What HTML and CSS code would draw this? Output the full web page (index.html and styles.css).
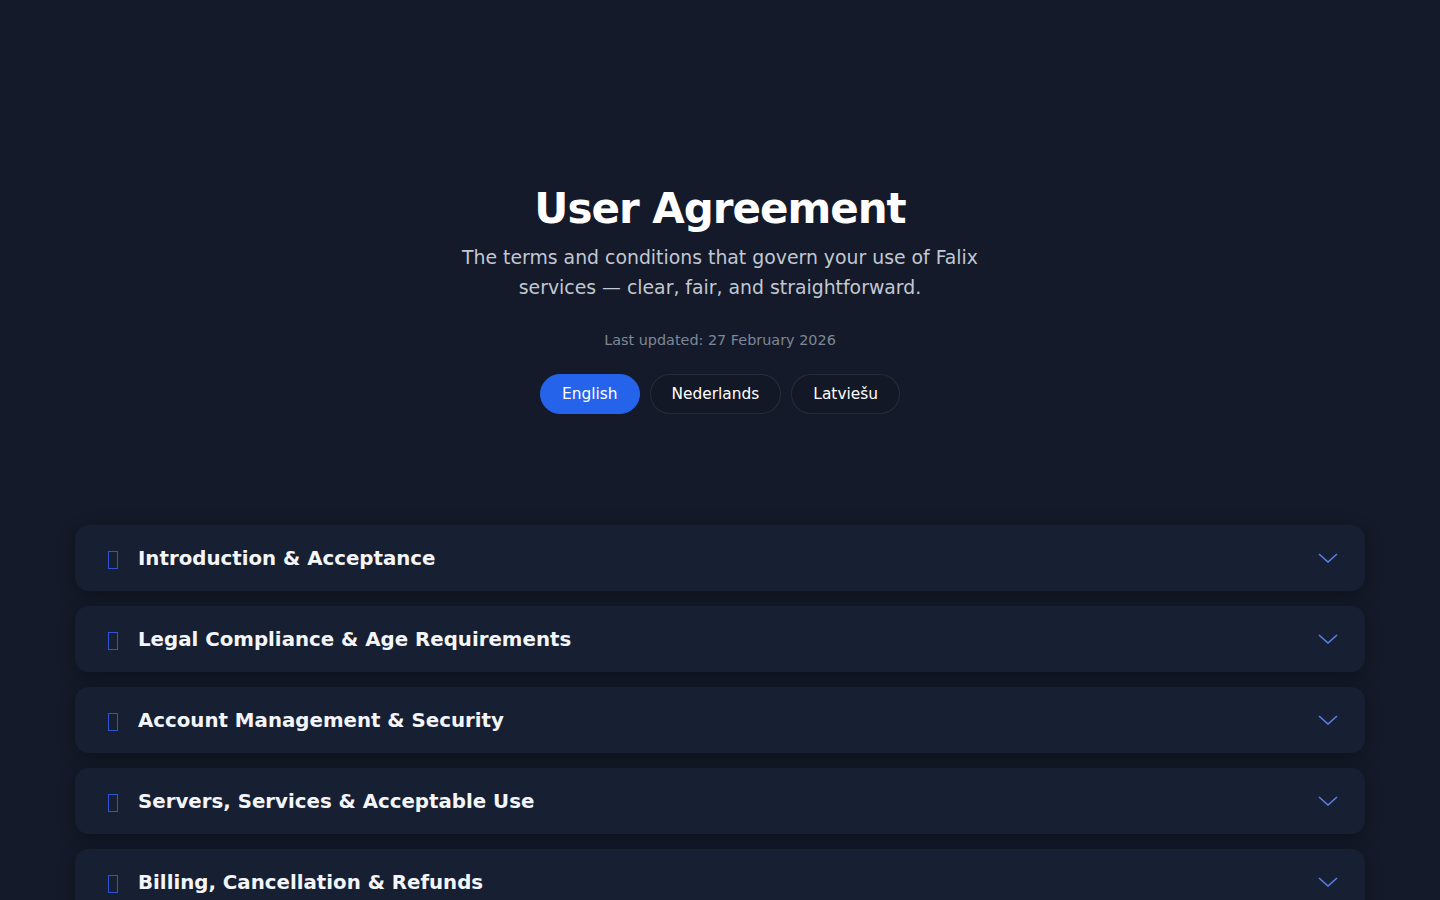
FILE: index.html
```html
<!DOCTYPE html>
<html lang="en">
<head>
<meta charset="utf-8">
<title>User Agreement — Falix</title>
<link rel="stylesheet" href="styles.css">
</head>
<body>
<main class="page">
  <header class="hero">
    <h1 class="hero-title">User Agreement</h1>
    <p class="hero-lead">The terms and conditions that govern your use of Falix services — clear, fair, and straightforward.</p>
    <p class="hero-meta">Last updated: 27 February 2026</p>
    <nav class="lang-switch">
      <button class="lang-btn is-active">English</button>
      <button class="lang-btn">Nederlands</button>
      <button class="lang-btn">Latviešu</button>
    </nav>
  </header>

  <section class="sections">
    <div class="section-card">
      <span class="section-icon"></span>
      <h2 class="section-title">Introduction &amp; Acceptance</h2>
      <svg class="chevron" viewBox="0 0 20 10" width="20" height="10"><path d="M1 1l9 8 9-8"/></svg>
    </div>
    <div class="section-card">
      <span class="section-icon"></span>
      <h2 class="section-title">Legal Compliance &amp; Age Requirements</h2>
      <svg class="chevron" viewBox="0 0 20 10" width="20" height="10"><path d="M1 1l9 8 9-8"/></svg>
    </div>
    <div class="section-card">
      <span class="section-icon"></span>
      <h2 class="section-title">Account Management &amp; Security</h2>
      <svg class="chevron" viewBox="0 0 20 10" width="20" height="10"><path d="M1 1l9 8 9-8"/></svg>
    </div>
    <div class="section-card">
      <span class="section-icon"></span>
      <h2 class="section-title">Servers, Services &amp; Acceptable Use</h2>
      <svg class="chevron" viewBox="0 0 20 10" width="20" height="10"><path d="M1 1l9 8 9-8"/></svg>
    </div>
    <div class="section-card">
      <span class="section-icon"></span>
      <h2 class="section-title">Billing, Cancellation &amp; Refunds</h2>
      <svg class="chevron" viewBox="0 0 20 10" width="20" height="10"><path d="M1 1l9 8 9-8"/></svg>
    </div>
  </section>
</main>
</body>
</html>
```

FILE: styles.css
```css
* { box-sizing: border-box; }

html, body {
  margin: 0;
  padding: 0;
  background: #141a29;
  color: #ffffff;
  font-family: "DejaVu Sans", "Noto Sans", sans-serif;
}

.page {
  max-width: 1290px;
  margin: 0 auto;
}

.hero {
  display: flex;
  flex-direction: column;
  align-items: center;
  text-align: center;
  padding: 183px 0 111px;
}

.hero-title {
  margin: 0;
  font-size: 42px;
  font-weight: 700;
  line-height: 52px;
  letter-spacing: -1px;
}

.hero-lead {
  margin: 8px 0 0;
  max-width: 560px;
  font-size: 18.85px;
  line-height: 30px;
  color: #c2c8d3;
}

.hero-meta {
  margin: 27px 0 0;
  font-size: 14.4px;
  line-height: 20px;
  color: #7f8797;
}

.lang-switch {
  display: flex;
  gap: 10px;
  margin-top: 24px;
}

.lang-btn {
  font-family: inherit;
  font-size: 15.4px;
  height: 40px;
  padding: 0 21px;
  border-radius: 999px;
  border: 1px solid rgba(255, 255, 255, 0.09);
  background: #131826;
  color: #ffffff;
  cursor: pointer;
}

.lang-btn.is-active {
  background: #2563eb;
  border-color: #2563eb;
}

.sections {
  display: flex;
  flex-direction: column;
  gap: 15px;
}

.section-card {
  display: flex;
  align-items: center;
  height: 66px;
  padding: 0 27px 0 33px;
  background: #172033;
  border-radius: 14px;
  box-shadow: 0 4px 18px rgba(0, 0, 0, 0.3);
}

.section-icon {
  width: 10px;
  height: 18px;
  border: 1px solid #2f55d4;
  margin: 3px 20px 0 0;
  flex: none;
}

.section-title {
  margin: 0;
  flex: 1;
  font-size: 19.8px;
  font-weight: 700;
  color: #f3f5f9;
}

.chevron {
  fill: none;
  stroke: #5b7de6;
  stroke-width: 1.6;
  flex: none;
}
```
